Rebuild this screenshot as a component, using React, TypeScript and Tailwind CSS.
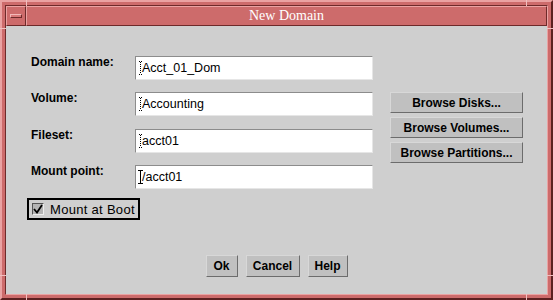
import React from 'react';

const font = { fontFamily: '"Liberation Sans", Arial, sans-serif' };

function Cursor({ active }: { active?: boolean }) {
  // inactive cursor is dotted, the focused one is a solid I-beam
  return (
    <svg width="5" height="14" viewBox="0 0 5 14" className="shrink-0 -mr-[1px]">
      {active ? (
        <g stroke="#000" strokeWidth="1" shapeRendering="crispEdges">
          <line x1="0" y1="0.5" x2="5" y2="0.5" />
          <line x1="2.5" y1="0" x2="2.5" y2="14" />
          <line x1="0" y1="13.5" x2="5" y2="13.5" />
        </g>
      ) : (
        <g stroke="#000" strokeWidth="1" strokeDasharray="1 1" shapeRendering="crispEdges">
          <line x1="1" y1="0.5" x2="4" y2="0.5" />
          <line x1="2.5" y1="1" x2="2.5" y2="13" />
          <line x1="1" y1="13.5" x2="4" y2="13.5" />
        </g>
      )}
    </svg>
  );
}

function Field({ label, value, active }: { label: string; value: string; active?: boolean }) {
  return (
    <div className="flex items-start">
      <div className="w-[104px] text-[12px] font-bold leading-[14px] text-black -mt-[1px]">{label}</div>
      <div className="w-[238px] h-[24px] flex items-center bg-white border border-t-[#8c8c8c] border-l-[#8c8c8c] border-b-[#e6e6e6] border-r-[#e6e6e6] pl-[2px]">
        <Cursor active={active} />
        <span className="text-[12.5px] leading-none text-black">{value}</span>
      </div>
    </div>
  );
}

function Btn({ children, className = '' }: { children: React.ReactNode; className?: string }) {
  return (
    <button
      className={
        'flex items-center justify-center bg-[#c0c0c0] border border-t-[#d8d8d8] border-l-[#d8d8d8] border-b-[#6c6c6c] border-r-[#6c6c6c] text-[12px] font-bold text-black leading-none ' +
        className
      }
    >
      {children}
    </button>
  );
}

export default function App() {
  return (
    <div
      style={font}
      className="relative w-[553px] h-[300px] flex flex-col bg-[#cd6b6b] border-t-2 border-l-2 border-r-2 border-b-2 border-t-[#eaa2a2] border-l-[#eaa2a2] border-b-[#5c2020] border-r-[#5c2020] p-[3px]"
    >
      <div className="flex-1 flex flex-col border border-t-[#6e2a2a] border-l-[#6e2a2a] border-b-[#eaa2a2] border-r-[#eaa2a2]">
        {/* title bar */}
        <div className="h-[20px] flex shrink-0">
          <div className="w-[20px] h-[20px] flex items-center justify-center border border-t-[#eaa2a2] border-l-[#eaa2a2] border-b-[#6e2a2a] border-r-[#6e2a2a]">
            <div className="w-[12px] h-[4px] border border-t-[#f2b8b8] border-l-[#f2b8b8] border-b-[#6e2a2a] border-r-[#6e2a2a] bg-[#d87878]" />
          </div>
          <div className="flex-1 flex items-center justify-center border border-t-[#eaa2a2] border-l-[#eaa2a2] border-b-[#6e2a2a] border-r-[#6e2a2a]">
            <span className="text-white text-[14px] leading-none" style={{ fontFamily: '"Liberation Serif", "DejaVu Serif", serif' }}>
              New Domain
            </span>
          </div>
        </div>

        {/* body */}
        <div className="flex-1 flex flex-col bg-[#cfcfcf] pl-[25px] pt-[30px]">
          <div className="flex">
            <div className="flex flex-col">
              <Field label="Domain name:" value="Acct_01_Dom" />
              <div className="h-[12px]" />
              <Field label="Volume:" value="Accounting" />
              <div className="h-[13px]" />
              <Field label="Fileset:" value="acct01" />
              <div className="h-[12px]" />
              <Field label="Mount point:" value="/acct01" active />
              <div className="mt-[9px] -ml-[4px] w-[113px] h-[22px] flex items-center border-2 border-black pl-[3px]">
                <div className="w-[12px] h-[12px] flex items-center justify-center bg-[#b4b4b4] border border-t-[#555] border-l-[#555] border-b-[#eee] border-r-[#eee]">
                  <svg width="10" height="10" viewBox="0 0 10 10">
                    <path d="M1 5 L4 8.5 L9 1" stroke="#000" strokeWidth="1.8" fill="none" />
                  </svg>
                </div>
                <span className="ml-[6px] text-[13px] text-black leading-none tracking-[0.3px]">Mount at Boot</span>
              </div>
            </div>
            <div className="flex flex-col gap-[4px] ml-[17px] mt-[36px]">
              <Btn className="w-[133px] h-[21px]">Browse Disks...</Btn>
              <Btn className="w-[133px] h-[21px]">Browse Volumes...</Btn>
              <Btn className="w-[133px] h-[21px]">Browse Partitions...</Btn>
            </div>
          </div>

          <div className="flex-1" />
          <div className="flex justify-center gap-[8px] mb-[17px] -ml-[25px]">
            <Btn className="w-[32px] h-[22px]">Ok</Btn>
            <Btn className="w-[54px] h-[22px]">Cancel</Btn>
            <Btn className="w-[40px] h-[22px]">Help</Btn>
          </div>
        </div>
      </div>

      {/* frame resize ticks */}
      <div className="absolute left-[-2px] top-[26px] w-[6px] h-[1px] bg-[#f0c0c0]" />
      <div className="absolute left-[-2px] bottom-[22px] w-[6px] h-[1px] bg-[#f0c0c0]" />
      <div className="absolute right-[-2px] top-[26px] w-[6px] h-[1px] bg-[#f0c0c0]" />
      <div className="absolute right-[-2px] bottom-[22px] w-[6px] h-[1px] bg-[#f0c0c0]" />
      <div className="absolute left-[24px] top-[-2px] w-[1px] h-[6px] bg-[#f0c0c0]" />
      <div className="absolute right-[24px] top-[-2px] w-[1px] h-[6px] bg-[#f0c0c0]" />
      <div className="absolute left-[24px] bottom-[-2px] w-[1px] h-[6px] bg-[#f0c0c0]" />
      <div className="absolute right-[24px] bottom-[-2px] w-[1px] h-[6px] bg-[#f0c0c0]" />
    </div>
  );
}
